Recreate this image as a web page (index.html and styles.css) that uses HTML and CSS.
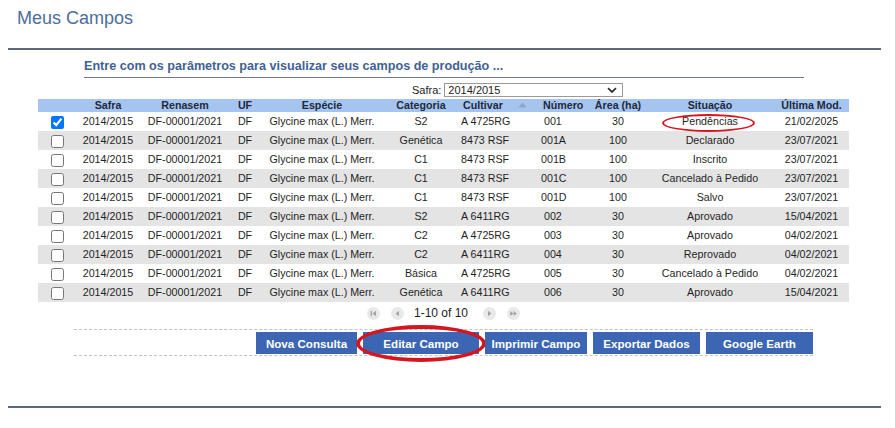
FILE: index.html
```html
<!DOCTYPE html>
<html lang="pt-BR">
<head>
<meta charset="utf-8">
<title>Meus Campos</title>
<link rel="stylesheet" href="styles.css">
</head>
<body>
<div class="page">
  <h1 class="title">Meus Campos</h1>
  <div class="rule"></div>
  <h2 class="subtitle">Entre com os parâmetros para visualizar seus campos de produção ...</h2>
  <div class="filter">
    <label class="filter-label" for="safra">Safra:</label>
    <span class="select-wrap">
      <select id="safra" class="select"><option>2014/2015</option></select>
      <svg class="chev" width="10" height="7" viewBox="0 0 10 7"><path d="M1 1.2 L5 5 L9 1.2" fill="none" stroke="#333" stroke-width="1.8"/></svg>
    </span>
  </div>
  <table class="grid">
    <colgroup>
      <col class="c-chk"><col class="c-safra"><col class="c-ren"><col class="c-uf"><col class="c-esp"><col class="c-cat"><col class="c-cult"><col class="c-num"><col class="c-area"><col class="c-sit"><col class="c-mod">
    </colgroup>
    <thead>
      <tr>
        <th></th><th>Safra</th><th>Renasem</th><th>UF</th><th>Espécie</th><th>Categoria</th>
        <th class="left">Cultivar <svg class="sort" width="9" height="6" viewBox="0 0 9 6"><path d="M0.5 5.5 L4.5 0.5 L8.5 5.5 Z" fill="#8fa3c3"/></svg></th>
        <th class="left">Número</th><th>Área (ha)</th><th>Situação</th><th>Última Mod.</th>
      </tr>
    </thead>
    <tbody>
      <tr><td><input type="checkbox" class="chk" checked></td><td>2014/2015</td><td>DF-00001/2021</td><td>DF</td><td>Glycine max (L.) Merr.</td><td>S2</td><td class="left">A 4725RG</td><td class="left">&nbsp;001</td><td>30</td><td class="mark-cell">Pendências<span class="ring ring-small"></span></td><td>21/02/2025</td></tr>
      <tr class="alt"><td><input type="checkbox" class="chk"></td><td>2014/2015</td><td>DF-00001/2021</td><td>DF</td><td>Glycine max (L.) Merr.</td><td>Genética</td><td class="left">8473 RSF</td><td class="left">001A</td><td>100</td><td>Declarado</td><td>23/07/2021</td></tr>
      <tr><td><input type="checkbox" class="chk"></td><td>2014/2015</td><td>DF-00001/2021</td><td>DF</td><td>Glycine max (L.) Merr.</td><td>C1</td><td class="left">8473 RSF</td><td class="left">001B</td><td>100</td><td>Inscrito</td><td>23/07/2021</td></tr>
      <tr class="alt"><td><input type="checkbox" class="chk"></td><td>2014/2015</td><td>DF-00001/2021</td><td>DF</td><td>Glycine max (L.) Merr.</td><td>C1</td><td class="left">8473 RSF</td><td class="left">001C</td><td>100</td><td>Cancelado à Pedido</td><td>23/07/2021</td></tr>
      <tr><td><input type="checkbox" class="chk"></td><td>2014/2015</td><td>DF-00001/2021</td><td>DF</td><td>Glycine max (L.) Merr.</td><td>C1</td><td class="left">8473 RSF</td><td class="left">001D</td><td>100</td><td>Salvo</td><td>23/07/2021</td></tr>
      <tr class="alt"><td><input type="checkbox" class="chk"></td><td>2014/2015</td><td>DF-00001/2021</td><td>DF</td><td>Glycine max (L.) Merr.</td><td>S2</td><td class="left">A 6411RG</td><td class="left">&nbsp;002</td><td>30</td><td>Aprovado</td><td>15/04/2021</td></tr>
      <tr><td><input type="checkbox" class="chk"></td><td>2014/2015</td><td>DF-00001/2021</td><td>DF</td><td>Glycine max (L.) Merr.</td><td>C2</td><td class="left">A 4725RG</td><td class="left">&nbsp;003</td><td>30</td><td>Aprovado</td><td>04/02/2021</td></tr>
      <tr class="alt"><td><input type="checkbox" class="chk"></td><td>2014/2015</td><td>DF-00001/2021</td><td>DF</td><td>Glycine max (L.) Merr.</td><td>C2</td><td class="left">A 6411RG</td><td class="left">&nbsp;004</td><td>30</td><td>Reprovado</td><td>04/02/2021</td></tr>
      <tr><td><input type="checkbox" class="chk"></td><td>2014/2015</td><td>DF-00001/2021</td><td>DF</td><td>Glycine max (L.) Merr.</td><td>Básica</td><td class="left">A 4725RG</td><td class="left">&nbsp;005</td><td>30</td><td>Cancelado à Pedido</td><td>04/02/2021</td></tr>
      <tr class="alt"><td><input type="checkbox" class="chk"></td><td>2014/2015</td><td>DF-00001/2021</td><td>DF</td><td>Glycine max (L.) Merr.</td><td>Genética</td><td class="left">A 6411RG</td><td class="left">&nbsp;006</td><td>30</td><td>Aprovado</td><td>15/04/2021</td></tr>
    </tbody>
  </table>
  <div class="pager">
    <svg class="pg" width="13" height="13" viewBox="0 0 13 13"><circle cx="6.5" cy="6.5" r="6.5" fill="#e9e9e9"/><rect x="3.6" y="3.8" width="1.3" height="5.4" fill="#a3a3a3"/><path d="M9 3.8 L5.4 6.5 L9 9.2 Z" fill="#a3a3a3"/></svg>
    <svg class="pg" width="13" height="13" viewBox="0 0 13 13"><circle cx="6.5" cy="6.5" r="6.5" fill="#e9e9e9"/><path d="M8 3.8 L4.6 6.5 L8 9.2 Z" fill="#a3a3a3"/></svg>
    <span class="pg-text">1-10 of 10</span>
    <svg class="pg" width="13" height="13" viewBox="0 0 13 13"><circle cx="6.5" cy="6.5" r="6.5" fill="#e9e9e9"/><path d="M5 3.8 L8.4 6.5 L5 9.2 Z" fill="#a3a3a3"/></svg>
    <svg class="pg" width="13" height="13" viewBox="0 0 13 13"><circle cx="6.5" cy="6.5" r="6.5" fill="#e9e9e9"/><path d="M3.2 3.9 L6.4 6.5 L3.2 9.1 Z M6.6 3.9 L9.8 6.5 L6.6 9.1 Z" fill="#a3a3a3"/></svg>
  </div>
  <div class="actions">
    <button class="btn b-nova">Nova Consulta</button>
    <button class="btn b-editar">Editar Campo<span class="ring ring-big"></span></button>
    <button class="btn b-imprimir">Imprimir Campo</button>
    <button class="btn b-exportar">Exportar Dados</button>
    <button class="btn b-google">Google Earth</button>
  </div>
  <div class="rule rule-bottom"></div>
</div>
</body>
</html>
```
FILE: styles.css
```css
html, body {
  margin: 0;
  padding: 0;
  background: #ffffff;
}
body {
  font-family: "Liberation Sans", Arial, sans-serif;
  color: #222222;
}
.page {
  padding: 0 8px;
  width: 873px;
}
.title {
  margin: 0 0 0 9px;
  padding-top: 8px;
  font-size: 18px;
  line-height: 20px;
  font-weight: normal;
  color: #4c6d9c;
}
.rule {
  margin-top: 20px;
  border-top: 2px solid #5d6878;
  height: 0;
}
.subtitle {
  margin: 8px 0 0 76px;
  width: 720px;
  font-size: 12.6px;
  line-height: 16px;
  font-weight: bold;
  color: #3f6292;
  padding-bottom: 3px;
  border-bottom: 1px solid #6e7b8c;
}
.filter {
  margin-top: 5px;
  height: 14px;
  padding-left: 404px;
  display: flex;
  align-items: center;
  gap: 3px;
  font-size: 11px;
}
.filter-label {
  color: #222;
}
.select-wrap {
  position: relative;
  display: inline-block;
}
.select {
  appearance: none;
  -webkit-appearance: none;
  width: 179px;
  height: 14px;
  box-sizing: border-box;
  border: 1px solid #9a9a9a;
  border-radius: 0;
  background: #fff;
  padding: 0 0 0 3px;
  margin: 0;
  font-family: "Liberation Sans", Arial, sans-serif;
  font-size: 11px;
  line-height: 12px;
  color: #222;
  display: block;
}
.chev {
  position: absolute;
  right: 6px;
  top: 4px;
}
.grid {
  margin: 2px 0 0 30px;
  width: 811px;
  border-collapse: collapse;
  table-layout: fixed;
  font-size: 10.7px;
}
.c-chk { width: 38px; }
.c-safra { width: 64px; }
.c-ren { width: 90px; }
.c-uf { width: 30px; }
.c-esp { width: 124px; }
.c-cat { width: 74px; }
.c-cult { width: 80px; }
.c-num { width: 52px; }
.c-area { width: 56px; }
.c-sit { width: 128px; }
.c-mod { width: 75px; }
.grid th {
  background: #a6c4f0;
  height: 13px;
  line-height: 13px;
  padding: 0;
  font-weight: bold;
  color: #1e2a3a;
  text-align: center;
  white-space: nowrap;
}
.grid td {
  height: 19px;
  line-height: 19px;
  padding: 0;
  text-align: center;
  white-space: nowrap;
  color: #1f1f1f;
}
.grid th.left, .grid td.left {
  text-align: left;
  padding-left: 3px;
}
.grid th.left {
  padding-left: 5px;
}
.sort {
  margin-left: 12px;
  vertical-align: 1px;
}
.grid tr.alt td {
  background: #e4e4e4;
}
.chk {
  margin: 0;
  width: 13px;
  height: 13px;
  vertical-align: middle;
}
.mark-cell {
  position: relative;
}
.ring {
  position: absolute;
  border-style: solid;
  border-color: #d5161f;
  border-radius: 50%;
  pointer-events: none;
}
.ring-small {
  left: 16px;
  top: 2px;
  width: 89px;
  height: 14px;
  border-width: 2px;
}
.pager {
  margin-top: 2px;
  margin-left: 30px;
  width: 811px;
  height: 18px;
  display: flex;
  align-items: center;
  justify-content: center;
  gap: 11px;
}
.pg {
  display: block;
}
.pg-text {
  font-size: 12px;
  color: #222;
  margin: 0 4px 0 -1px;
}
.actions {
  margin: 7px 0 0 66px;
  width: 739px;
  border-top: 1px dashed #c2c2c2;
  border-bottom: 1px dashed #c2c2c2;
  padding: 2px 0 1px 0;
  display: flex;
  justify-content: flex-end;
  gap: 6px;
}
.btn {
  position: relative;
  height: 22px;
  margin: 0;
  padding: 0;
  border: none;
  border-radius: 0;
  background: #3c66b4;
  color: #ffffff;
  font-family: "Liberation Sans", Arial, sans-serif;
  font-size: 11.6px;
  font-weight: bold;
  text-align: center;
}
.b-nova { width: 101px; }
.b-editar { width: 116px; }
.b-imprimir { width: 102px; }
.b-exportar { width: 107px; }
.b-google { width: 107px; }
.ring-big {
  left: -7px;
  top: -7px;
  width: 122px;
  height: 29px;
  border-width: 4px;
}
.rule-bottom {
  margin-top: 50px;
}
```
